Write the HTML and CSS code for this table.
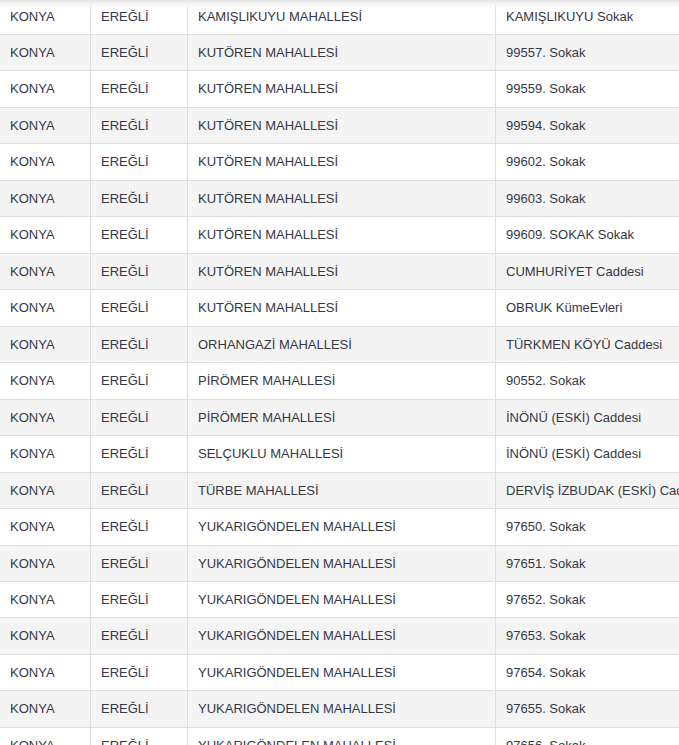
FILE: index.html
```html
<!DOCTYPE html>
<html lang="tr">
<head>
<meta charset="utf-8">
<title>Sokak listesi</title>
<link rel="stylesheet" href="styles.css">
</head>
<body>
<div class="top-shadow"></div>
<table class="grid">
  <colgroup>
    <col class="c1"><col class="c2"><col class="c3"><col class="c4">
  </colgroup>
  <tbody>
    <tr><td>KONYA</td><td>EREĞLİ</td><td>KAMIŞLIKUYU MAHALLESİ</td><td>KAMIŞLIKUYU Sokak</td></tr>
    <tr><td>KONYA</td><td>EREĞLİ</td><td>KUTÖREN MAHALLESİ</td><td>99557. Sokak</td></tr>
    <tr><td>KONYA</td><td>EREĞLİ</td><td>KUTÖREN MAHALLESİ</td><td>99559. Sokak</td></tr>
    <tr><td>KONYA</td><td>EREĞLİ</td><td>KUTÖREN MAHALLESİ</td><td>99594. Sokak</td></tr>
    <tr><td>KONYA</td><td>EREĞLİ</td><td>KUTÖREN MAHALLESİ</td><td>99602. Sokak</td></tr>
    <tr><td>KONYA</td><td>EREĞLİ</td><td>KUTÖREN MAHALLESİ</td><td>99603. Sokak</td></tr>
    <tr><td>KONYA</td><td>EREĞLİ</td><td>KUTÖREN MAHALLESİ</td><td>99609. SOKAK Sokak</td></tr>
    <tr><td>KONYA</td><td>EREĞLİ</td><td>KUTÖREN MAHALLESİ</td><td>CUMHURİYET Caddesi</td></tr>
    <tr><td>KONYA</td><td>EREĞLİ</td><td>KUTÖREN MAHALLESİ</td><td>OBRUK KümeEvleri</td></tr>
    <tr><td>KONYA</td><td>EREĞLİ</td><td>ORHANGAZİ MAHALLESİ</td><td>TÜRKMEN KÖYÜ Caddesi</td></tr>
    <tr><td>KONYA</td><td>EREĞLİ</td><td>PİRÖMER MAHALLESİ</td><td>90552. Sokak</td></tr>
    <tr><td>KONYA</td><td>EREĞLİ</td><td>PİRÖMER MAHALLESİ</td><td>İNÖNÜ (ESKİ) Caddesi</td></tr>
    <tr><td>KONYA</td><td>EREĞLİ</td><td>SELÇUKLU MAHALLESİ</td><td>İNÖNÜ (ESKİ) Caddesi</td></tr>
    <tr><td>KONYA</td><td>EREĞLİ</td><td>TÜRBE MAHALLESİ</td><td>DERVİŞ İZBUDAK (ESKİ) Caddesi</td></tr>
    <tr><td>KONYA</td><td>EREĞLİ</td><td>YUKARIGÖNDELEN MAHALLESİ</td><td>97650. Sokak</td></tr>
    <tr><td>KONYA</td><td>EREĞLİ</td><td>YUKARIGÖNDELEN MAHALLESİ</td><td>97651. Sokak</td></tr>
    <tr><td>KONYA</td><td>EREĞLİ</td><td>YUKARIGÖNDELEN MAHALLESİ</td><td>97652. Sokak</td></tr>
    <tr><td>KONYA</td><td>EREĞLİ</td><td>YUKARIGÖNDELEN MAHALLESİ</td><td>97653. Sokak</td></tr>
    <tr><td>KONYA</td><td>EREĞLİ</td><td>YUKARIGÖNDELEN MAHALLESİ</td><td>97654. Sokak</td></tr>
    <tr><td>KONYA</td><td>EREĞLİ</td><td>YUKARIGÖNDELEN MAHALLESİ</td><td>97655. Sokak</td></tr>
    <tr><td>KONYA</td><td>EREĞLİ</td><td>YUKARIGÖNDELEN MAHALLESİ</td><td>97656. Sokak</td></tr>
  </tbody>
</table>
</body>
</html>
```
FILE: styles.css
```css
html, body {
  margin: 0;
  padding: 0;
  background: #fff;
  overflow: hidden;
}

body {
  font-family: "Liberation Sans", Arial, sans-serif;
  font-size: 13px;
  color: #353845;
}

.top-shadow {
  position: fixed;
  top: 0;
  left: 0;
  right: 0;
  height: 9px;
  background: linear-gradient(to bottom, rgba(226,226,226,1) 0%, rgba(245,245,245,0.95) 45%, rgba(255,255,255,0) 100%);
  z-index: 2;
}

.grid {
  border-collapse: collapse;
  table-layout: fixed;
  width: 800px;
  margin-top: -2.5px;
  margin-left: -1px;
}

.c1 { width: 91px; }
.c2 { width: 97px; }
.c3 { width: 308px; }
.c4 { width: 304px; }

.grid td {
  border: 1px solid #dedede;
  padding: 8px 10px;
  line-height: 19.47px;
  white-space: nowrap;
  overflow: hidden;
}

.grid tr:nth-child(even) td {
  background: #f4f4f4;
}
```
